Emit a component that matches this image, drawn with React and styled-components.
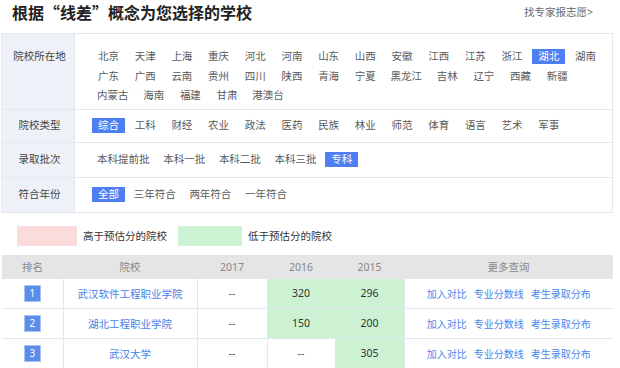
import styled, { createGlobalStyle } from "styled-components";

const GlobalStyle = createGlobalStyle`
	body {
		margin: 0;
		background: #fff;
		font-family: "Noto Sans", "Noto Sans CJK SC", sans-serif;
		color: #333;
	}
`

const Page = styled.div`
	width: 612px;
	margin-left: 1px;
`

const Header = styled.div`
	display: flex;
	justify-content: space-between;
	align-items: flex-start;
	height: 33px;
	padding: 2px 20px 0 11px;
	box-sizing: border-box;
`

const Title = styled.h2`
	margin: 0;
	font-size: 16px;
	line-height: 20px;
	font-weight: bold;
	color: #222;
	font-family: "Noto Sans CJK SC", sans-serif;
`

const ExpertLink = styled.a`
	font-size: 10.5px;
	line-height: 20px;
	color: #666;
	text-decoration: none;
`

const FilterBox = styled.div`
	border: 1px solid #e3e8f1;
`

const FilterRow = styled.div`
	display: flex;
	min-height: ${p => p.$h}px;
	border-bottom: ${p => (p.$last ? "none" : "1px solid #e3e8f1")};
`

const FilterLabel = styled.div`
	width: 73px;
	flex-shrink: 0;
	background: #eef2f8;
	border-right: 1px solid #e3e8f1;
	text-align: center;
	font-size: 10.5px;
	color: #444;
	display: flex;
	align-items: ${p => (p.$top ? "flex-start" : "center")};
	justify-content: center;
	padding-top: ${p => (p.$top ? "13px" : "0")};
	padding-left: 3px;
	line-height: 19.5px;
	box-sizing: border-box;
`

const FilterOptions = styled.div`
	flex: 1;
	display: flex;
	flex-wrap: wrap;
	align-items: center;
	align-content: ${p => (p.$multi ? "flex-start" : "center")};
	padding: ${p => (p.$multi ? "13px 0 3px 17px" : "0 0 0 17px")};
`

const Option = styled.span`
	display: inline-block;
	box-sizing: border-box;
	min-width: 33px;
	height: 15px;
	line-height: 15px;
	padding: 0 5px;
	margin: 2.25px 3.7px 2.25px 0;
	text-align: center;
	font-size: 10.5px;
	white-space: nowrap;
	color: ${p => (p.$active ? "#fff" : "#5a5a5a")};
	background: ${p => (p.$active ? "#4d7ff2" : "transparent")};
`

const Legend = styled.div`
	display: flex;
	align-items: center;
	height: 20px;
	margin: 13px 0 9px 16px;
	font-size: 10.5px;
	color: #333;
`

const Swatch = styled.span`
	display: inline-block;
	width: ${p => p.$w}px;
	height: 20px;
	background: ${p => p.$color};
	margin-right: 6px;
`

const LegendText = styled.span`
	margin-right: 11px;
`

const Table = styled.table`
	width: 611px;
	margin-left: 1px;
	border-collapse: collapse;
	table-layout: fixed;
	font-size: 10.5px;
`

const Th = styled.th`
	height: 24px;
	padding: 0;
	background: #e5e5e5;
	color: #888;
	font-weight: normal;
	text-align: center;
`

const Td = styled.td`
	height: 29px;
	padding: 0;
	text-align: center;
	border-bottom: 1px solid #e1e7f0;
	border-right: ${p => (p.$noRight ? "none" : "1px solid #e1e7f0")};
	background: ${p => (p.$green ? "#ccf2d3" : "#fff")};
	color: ${p => (p.$dim ? "#555" : "#333")};
`

const Rank = styled.span`
	display: inline-block;
	width: 15px;
	height: 15px;
	line-height: 15px;
	background: #5b8de8;
	box-shadow: 0 0 0 1px #a9c3f2;
	color: #fff;
	font-size: 10px;
	vertical-align: middle;
`

const SchoolLink = styled.a`
	color: #4583ea;
	text-decoration: none;
`

const Links = styled.div`
	display: flex;
	justify-content: center;
	gap: 7px;
	font-size: 10px;
`

const MoreLink = styled.a`
	color: #4a86ee;
	text-decoration: none;
`

const provinces = [
	"北京", "天津", "上海", "重庆", "河北", "河南", "山东", "山西", "安徽", "江西", "江苏", "浙江", "湖北", "湖南",
	"广东", "广西", "云南", "贵州", "四川", "陕西", "青海", "宁夏", "黑龙江", "吉林", "辽宁", "西藏", "新疆",
	"内蒙古", "海南", "福建", "甘肃", "港澳台",
]
const types = ["综合", "工科", "财经", "农业", "政法", "医药", "民族", "林业", "师范", "体育", "语言", "艺术", "军事"]
const batches = ["本科提前批", "本科一批", "本科二批", "本科三批", "专科"]
const years = ["全部", "三年符合", "两年符合", "一年符合"]

const schools = [
	{ rank: 1, name: "武汉软件工程职业学院", y2017: "--", y2016: "320", y2015: "296", g16: true, g15: true },
	{ rank: 2, name: "湖北工程职业学院", y2017: "--", y2016: "150", y2015: "200", g16: true, g15: true },
	{ rank: 3, name: "武汉大学", y2017: "--", y2016: "--", y2015: "305", g16: false, g15: true },
]

const App = () => {
	return (
		<Page>
			<GlobalStyle />
			<Header>
				<Title>根据“线差”概念为您选择的学校</Title>
				<ExpertLink href="#">找专家报志愿&gt;</ExpertLink>
			</Header>

			<FilterBox>
				<FilterRow $h={74}>
					<FilterLabel $top>院校所在地</FilterLabel>
					<FilterOptions $multi>
						{provinces.map(p => (
							<Option key={p} $active={p === "湖北"}>{p}</Option>
						))}
					</FilterOptions>
				</FilterRow>
				<FilterRow $h={32}>
					<FilterLabel>院校类型</FilterLabel>
					<FilterOptions>
						{types.map(t => (
							<Option key={t} $active={t === "综合"}>{t}</Option>
						))}
					</FilterOptions>
				</FilterRow>
				<FilterRow $h={34}>
					<FilterLabel>录取批次</FilterLabel>
					<FilterOptions>
						{batches.map(b => (
							<Option key={b} $active={b === "专科"}>{b}</Option>
						))}
					</FilterOptions>
				</FilterRow>
				<FilterRow $h={34} $last>
					<FilterLabel>符合年份</FilterLabel>
					<FilterOptions>
						{years.map(y => (
							<Option key={y} $active={y === "全部"}>{y}</Option>
						))}
					</FilterOptions>
				</FilterRow>
			</FilterBox>

			<Legend>
				<Swatch $w={60} $color="#fbdcdc" />
				<LegendText>高于预估分的院校</LegendText>
				<Swatch $w={64} $color="#cdf3d5" />
				<LegendText>低于预估分的院校</LegendText>
			</Legend>

			<Table>
				<colgroup>
					<col style={{ width: 61 }} />
					<col style={{ width: 134 }} />
					<col style={{ width: 70 }} />
					<col style={{ width: 68 }} />
					<col style={{ width: 69 }} />
					<col style={{ width: 209 }} />
				</colgroup>
				<thead>
					<tr>
						<Th>排名</Th>
						<Th>院校</Th>
						<Th>2017</Th>
						<Th>2016</Th>
						<Th>2015</Th>
						<Th>更多查询</Th>
					</tr>
				</thead>
				<tbody>
					{schools.map(s => (
						<tr key={s.rank}>
							<Td><Rank>{s.rank}</Rank></Td>
							<Td><SchoolLink href="#">{s.name}</SchoolLink></Td>
							<Td $dim>{s.y2017}</Td>
							<Td $green={s.g16} $dim={!s.g16}>{s.y2016}</Td>
							<Td $green={s.g15}>{s.y2015}</Td>
							<Td $noRight>
								<Links>
									<MoreLink href="#">加入对比</MoreLink>
									<MoreLink href="#">专业分数线</MoreLink>
									<MoreLink href="#">考生录取分布</MoreLink>
								</Links>
							</Td>
						</tr>
					))}
				</tbody>
			</Table>
		</Page>
	)
}

export default App
